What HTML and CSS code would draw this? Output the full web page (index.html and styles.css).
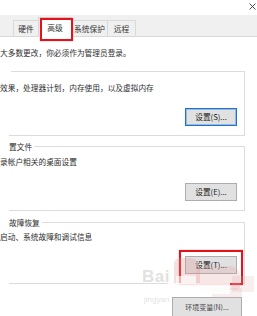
FILE: index.html
```html
<!DOCTYPE html>
<html lang="zh-CN">
<head>
<meta charset="utf-8">
<link rel="stylesheet" href="styles.css">
</head>
<body>
<div class="window">
  <div class="titlebar">
    <svg class="close" width="7" height="7" viewBox="0 0 7 7"><path d="M0.5 0.5L6.5 6.5M6.5 0.5L0.5 6.5" stroke="#333" stroke-width="0.9"/></svg>
  </div>
  <div class="tabs">
    <div class="tab t1">硬件</div>
    <div class="tab t2 active">高级</div>
    <div class="tab t3">系统保护</div>
    <div class="tab t4">远程</div>
  </div>
  <div class="panel">
    <div class="intro">大多数更改，你必须作为管理员登录。</div>

    <div class="group g1">
      <div class="head"><span class="label"></span><span class="line"></span></div>
      <div class="body">
        <div class="desc">效果，处理器计划，内存使用，以及虚拟内存</div>
        <div class="btn focus">设置(S)...</div>
      </div>
    </div>

    <div class="group g2">
      <div class="head"><span class="label">置文件</span><span class="line"></span></div>
      <div class="body">
        <div class="desc">录帐户相关的桌面设置</div>
        <div class="btn">设置(E)...</div>
      </div>
    </div>

    <div class="group g3">
      <div class="head"><span class="label">故障恢复</span><span class="line"></span></div>
      <div class="body">
        <div class="desc">启动、系统故障和调试信息</div>
        <div class="btn">设置(T)...</div>
      </div>
    </div>

    <div class="footer">
      <div class="btn wide">环境变量(N)...</div>
    </div>
  </div>

  <div class="mark mark-tab"></div>
  <div class="mark mark-btn"></div>
  <div class="wm">
    <div class="wm-bai">Bai</div>
    <div class="wm-jing">jingyan</div>
    <div class="blot b1"></div>
    <div class="blot b2"></div>
    <div class="blot b3"></div>
    <div class="blot b4"></div>
    <div class="wipe w1"></div>
    <div class="wipe w2"></div>
  </div>
</div>
</body>
</html>
```

FILE: styles.css
```css
html, body {
  margin: 0;
  padding: 0;
  background: #fff;
}
.window {
  position: relative;
  width: 257px;
  height: 316px;
  overflow: hidden;
  font-family: "Noto Sans CJK SC", "Microsoft YaHei", sans-serif;
  font-size: 7.7px;
  color: #2e2e2e;
  background: #fff;
}
.titlebar {
  height: 15px;
  display: flex;
  justify-content: flex-end;
  align-items: flex-start;
}
.close {
  margin: 3px 1px 0 0;
}
.tabs {
  height: 21px;
  background: #f0f0f0;
  border-bottom: 1px solid #d9d9d9;
  display: flex;
  align-items: flex-end;
  padding-left: 13px;
}
.tab {
  height: 16px;
  line-height: 16px;
  box-sizing: border-box;
  border: 1px solid #d9d9d9;
  border-bottom: none;
  border-right: none;
  text-align: center;
  color: #333;
}
.t1 { width: 25px; }
.t2 { width: 34px; }
.t3 { width: 35px; border-left: none; }
.t4 { width: 29px; border-right: 1px solid #d9d9d9; }
.tab.active {
  height: 20px;
  line-height: 20px;
  background: #fff;
  margin-bottom: -1px;
  border-right: 1px solid #d9d9d9;
}
.panel {
  padding-top: 11px;
}
.intro {
  line-height: 10px;
  height: 10px;
  white-space: nowrap;
}
.group {
  margin-left: 9px;
  width: 236px;
}
.g1 { margin-top: 9px; }
.g2 { margin-top: 6px; }
.g3 { margin-top: 7px; }
.head {
  height: 9px;
  display: flex;
  align-items: flex-end;
}
.label {
  line-height: 9px;
  height: 9px;
  padding-right: 2px;
  white-space: nowrap;
}
.line {
  flex: 1;
  height: 4px;
  border-top: 1px solid #dcdcdc;
  border-right: 1px solid #dcdcdc;
}
.body {
  border-right: 1px solid #dcdcdc;
  border-bottom: 1px solid #dcdcdc;
  display: flex;
  flex-direction: column;
  box-sizing: border-box;
  padding-bottom: 9px;
}
.g1 .body { height: 60px; padding-top: 7px; }
.g2 .body { height: 60px; padding-top: 6px; }
.g3 .body { height: 57px; padding-top: 5px; }
.desc {
  margin-left: -9px;
  line-height: 10px;
  height: 10px;
  white-space: nowrap;
}
.btn {
  margin-top: auto;
  align-self: flex-end;
  margin-right: 7px;
  width: 52px;
  height: 18px;
  box-sizing: border-box;
  background: #e1e1e1;
  border: 1px solid #adadad;
  text-align: center;
  line-height: 16px;
  color: #222;
  white-space: nowrap;
}
.btn.focus {
  border-color: #1b74d0;
  box-shadow: inset 0 0 0 1px rgba(27, 116, 208, 0.35);
}
.footer {
  display: flex;
  justify-content: flex-end;
  padding-right: 15px;
  margin-top: 13px;
}
.btn.wide {
  width: 70px;
  height: 22px;
  line-height: 18px;
  margin: 0;
  font-size: 7px;
  color: #444;
}
.mark {
  position: absolute;
  border: 2px solid #e3121b;
  box-shadow: 0 0 1px rgba(227, 18, 27, 0.6);
}
.mark-tab {
  left: 40px;
  top: 18px;
  width: 29px;
  height: 19px;
}
.mark-btn {
  left: 179px;
  top: 250px;
  width: 60px;
  height: 31px;
}
.wm {
  position: absolute;
  left: 0;
  top: 0;
  width: 257px;
  height: 316px;
  pointer-events: none;
}
.wm-bai {
  position: absolute;
  left: 142px;
  top: 267px;
  font-family: "Liberation Sans", Arial, sans-serif;
  font-weight: bold;
  font-size: 17px;
  color: rgba(195, 195, 195, 0.5);
  letter-spacing: 0.5px;
}
.wm-jing {
  position: absolute;
  left: 144px;
  top: 295px;
  font-family: "Liberation Sans", Arial, sans-serif;
  font-size: 8px;
  color: rgba(195, 195, 195, 0.5);
}
.blot {
  position: absolute;
  background: rgba(225, 150, 150, 0.3);
}
.b1 { left: 174px; top: 258px; width: 26px; height: 28px; border-radius: 6px 10px 2px 2px; }
.b2 { left: 196px; top: 266px; width: 44px; height: 24px; border-radius: 8px 10px 4px 4px; background: rgba(225, 160, 160, 0.25); }
.b3 { left: 212px; top: 288px; width: 30px; height: 10px; background: rgba(225, 170, 170, 0.2); }
.b4 { left: 232px; top: 276px; width: 22px; height: 16px; background: rgba(225, 170, 170, 0.2); }
.wipe {
  position: absolute;
  background: rgba(255, 255, 255, 0.85);
}
.w1 { left: 168px; top: 283px; width: 62px; height: 11px; }
.w2 { left: 176px; top: 276px; width: 20px; height: 8px; background: rgba(255, 255, 255, 0.6); }
```
